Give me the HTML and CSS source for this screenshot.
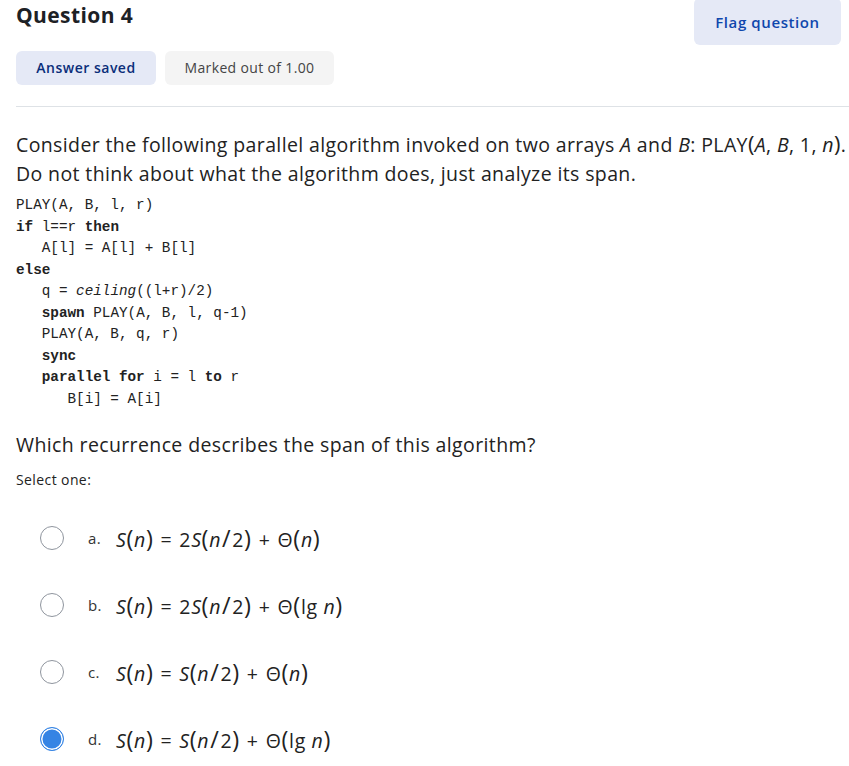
FILE: index.html
```html
<!DOCTYPE html>
<html>
<head>
<meta charset="utf-8">
<link rel="stylesheet" href="styles.css">
</head>
<body>
<div class="que">
  <div class="info">
    <div class="info-left">
      <h3 class="qno">Question 4</h3>
      <div class="badges">
        <span class="badge saved">Answer saved</span>
        <span class="badge grade">Marked out of 1.00</span>
      </div>
    </div>
    <button class="flag">Flag question</button>
  </div>
  <hr class="sep">
  <div class="qtext">
    <p class="lead">Consider the following parallel algorithm invoked on two arrays <i>A</i> and <i>B</i>: PLAY<span class="paren">(</span><i>A</i>, <i>B</i>, 1, <i>n</i><span class="paren">)</span>. Do not think about what the algorithm does, just analyze its span.</p>
<pre class="code">PLAY(A, B, l, r)
<b>if</b> l==r <b>then</b>
   A[l] = A[l] + B[l]
<b>else</b>
   q = <i>ceiling</i>((l+r)/2)
   <b>spawn</b> PLAY(A, B, l, q-1)
   PLAY(A, B, q, r)
   <b>sync</b>
   <b>parallel for</b> i = l <b>to</b> r
      B[i] = A[i]</pre>
    <p class="lead q2">Which recurrence describes the span of this algorithm?</p>
  </div>
  <div class="prompt">Select one:</div>
  <div class="answers">
    <label class="opt"><span class="radio"></span><span class="letter">a.</span><span class="math"><i>S</i><span class="paren">(</span><i>n</i><span class="paren">)</span><span class="op">=</span>2<i>S</i><span class="paren">(</span><i>n</i><span class="slash">/</span>2<span class="paren">)</span><span class="op">+</span>Θ<span class="paren">(</span><i>n</i><span class="paren">)</span></span></label>
    <label class="opt"><span class="radio"></span><span class="letter">b.</span><span class="math"><i>S</i><span class="paren">(</span><i>n</i><span class="paren">)</span><span class="op">=</span>2<i>S</i><span class="paren">(</span><i>n</i><span class="slash">/</span>2<span class="paren">)</span><span class="op">+</span>Θ<span class="paren">(</span>lg <i>n</i><span class="paren">)</span></span></label>
    <label class="opt"><span class="radio"></span><span class="letter">c.</span><span class="math"><i>S</i><span class="paren">(</span><i>n</i><span class="paren">)</span><span class="op">=</span><i>S</i><span class="paren">(</span><i>n</i><span class="slash">/</span>2<span class="paren">)</span><span class="op">+</span>Θ<span class="paren">(</span><i>n</i><span class="paren">)</span></span></label>
    <label class="opt"><span class="radio checked"></span><span class="letter">d.</span><span class="math"><i>S</i><span class="paren">(</span><i>n</i><span class="paren">)</span><span class="op">=</span><i>S</i><span class="paren">(</span><i>n</i><span class="slash">/</span>2<span class="paren">)</span><span class="op">+</span>Θ<span class="paren">(</span>lg <i>n</i><span class="paren">)</span></span></label>
  </div>
</div>
</body>
</html>
```
FILE: styles.css
```css
html, body {
  margin: 0;
  padding: 0;
  background: #ffffff;
}
body {
  font-family: "Open Sans", "DejaVu Sans", sans-serif;
  color: #1d2125;
}
.que {
  padding: 0 0 0 16px;
}
.info {
  display: flex;
  justify-content: space-between;
  align-items: flex-start;
  padding-right: 8px;
}
.qno {
  margin: 1px 0 0 0;
  font-size: 21px;
  font-weight: 700;
  line-height: 28px;
  letter-spacing: 0.4px;
  color: #1d2125;
}
.badges {
  display: flex;
  gap: 9px;
  margin-top: 22px;
}
.badge {
  display: inline-block;
  height: 34px;
  line-height: 34px;
  font-size: 14px;
  border-radius: 6px;
}
.badge.saved {
  background: #e5e9f6;
  color: #0a2e7a;
  width: 140px;
  text-align: center;
  font-weight: 600;
  letter-spacing: 0.5px;
}
.badge.grade {
  background: #f4f4f4;
  color: #444;
  width: 169px;
  text-align: center;
  letter-spacing: 0.35px;
}
.flag {
  margin-top: -2px;
  height: 47px;
  width: 147px;
  border: none;
  border-radius: 6px;
  background: #e5e9f6;
  color: #0f47ad;
  font-family: inherit;
  font-size: 15px;
  font-weight: 600;
  letter-spacing: 0.6px;
  padding: 0;
}
.sep {
  border: none;
  border-top: 1px solid #dee2e6;
  margin: 21px 0 0 0;
}
.qtext {
  padding-top: 23px;
}
.lead {
  margin: 0;
  font-size: 19.5px;
  line-height: 29px;
  letter-spacing: 0.38px;
  color: #222;
}
.paren {
  font-size: 1.12em;
  line-height: 1;
}
.code {
  margin: 7px 0 0 0;
  font-family: "Liberation Mono", "Courier New", monospace;
  font-size: 14.3px;
  line-height: 21.55px;
  color: #222;
}
.code b {
  font-weight: 700;
}
.q2 {
  margin-top: 20px;
}
.prompt {
  margin-top: 11px;
  font-size: 14px;
  letter-spacing: 0.4px;
  color: #222;
}
.answers {
  margin-top: 34px;
  display: flex;
  flex-direction: column;
  gap: 37px;
}
.opt {
  display: flex;
  align-items: center;
  height: 30px;
  padding-left: 24px;
}
.radio {
  width: 24px;
  height: 24px;
  border: 1px solid #8f959e;
  border-radius: 50%;
  box-sizing: border-box;
  flex: none;
}
.radio.checked {
  border: 1.5px solid #3584e4;
  background: #3584e4;
  box-shadow: inset 0 0 0 1.5px #fff;
}
.letter {
  margin-left: 24px;
  width: 28px;
  font-size: 15px;
  letter-spacing: 0.4px;
  color: #333;
}
.math {
  font-size: 19.5px;
  letter-spacing: 0.65px;
  color: #222;
}
.math .paren {
  font-size: 1.2em;
}
.op {
  margin: 0 7px;
}
.slash {
  font-size: 1.2em;
  margin: 0 1px;
}
```
